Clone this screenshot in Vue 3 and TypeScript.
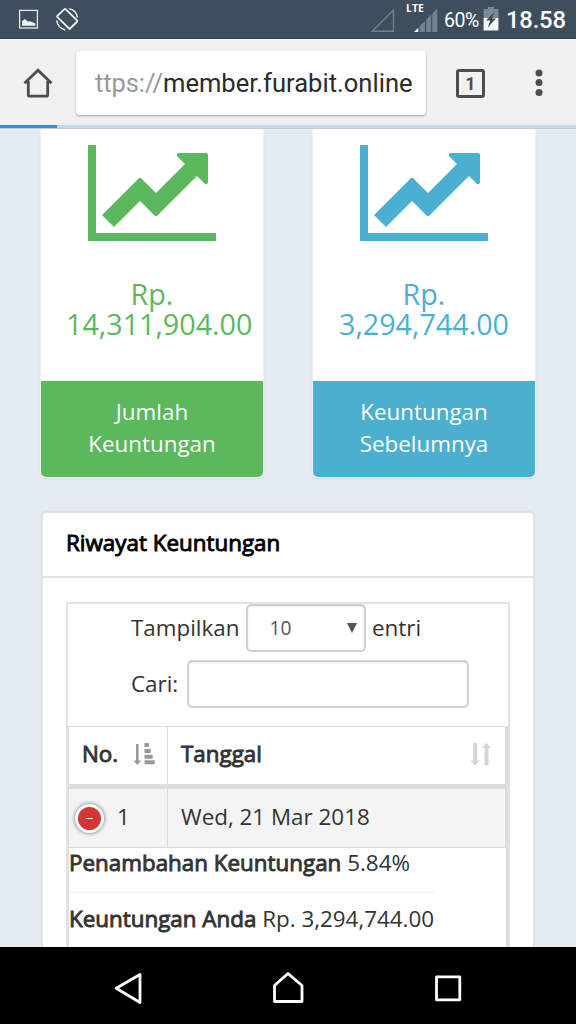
<script setup lang="ts">
interface Profit {
  amount: string
  lines: string[]
  tone: string
}

interface Detail {
  label: string
  value: string
}

const profits: Profit[] = [
  { amount: '14,311,904.00', lines: ['Jumlah', 'Keuntungan'], tone: 'green' },
  { amount: '3,294,744.00', lines: ['Keuntungan', 'Sebelumnya'], tone: 'blue' },
]

const details: Detail[] = [
  { label: 'Penambahan Keuntungan', value: '5.84%' },
  { label: 'Keuntungan Anda', value: 'Rp. 3,294,744.00' },
]
</script>

<template>
  <div class="phone">
    <header class="status">
      <svg class="notices" width="90" height="38" viewBox="0 0 90 38">
        <rect x="19.6" y="10.4" width="17.8" height="17.6" fill="none" stroke="#e4e8ea" stroke-width="1.3" />
        <path d="M22 25.8v-4.600l2.800-2.200 2.600 2.200 3.400.4 4.600 1.800v2.400z" fill="#eef1f2" />
        <g fill="none" stroke="#eef1f2">
          <path d="M64.2 9.4 57.6 15.6q-.9.9 0 1.8L69.6 29l7.2-7q.9-.9 0-1.800L65.8 9.400q-.8-.8-1.600 0z" stroke-width="1.9" />
          <path d="M69.2 8.700a10.600 10.600 0 0 1 8.300 9M65.300 30a10.600 10.600 0 0 1-8.600-9.600" stroke-width="1.4" />
        </g>
      </svg>
      <div class="signals">
        <svg width="76" height="38" viewBox="0 0 76 38">
          <path d="M2.3 31.3 23.500 10v21.300z" fill="none" stroke="#71808b" stroke-width="1.4" />
          <path d="M44 32l4.300-4.300V32z" fill="#f5f7f8" />
          <path d="M49.700 26.300l5.200-5.300v11h-5.200zM56.200 19.700l4.900-4.900V32h-4.900zM62.300 13.500l5-5V32h-5z" fill="#74828d" />
        </svg>
        <span class="lte">LTE</span>
        <span class="percent">60%</span>
        <svg class="battery" width="16" height="24" viewBox="0 0 16 24">
          <path d="M5 0h6v2h4.400v9H.6V2H5z" fill="#7b8992" />
          <path d="M0.600 11h14.800v12.500H.6z" fill="#f7f9fa" />
          <path d="M11.500 5 3 13.500h4.200L4.800 20.600 13 11.500H9z" fill="#3e4e5c" />
        </svg>
        <span class="clock">18.58</span>
      </div>
    </header>

    <div class="toolbar">
      <svg class="home" width="30" height="30" viewBox="0 0 30 30">
        <path d="M1.500 15.300 15 2.200l13.500 13.100M5.300 13v13.400q0 1.800 1.800 1.800h15.800q1.800 0 1.800-1.800V13" fill="none" stroke="#4d4d4d" stroke-width="2.8" />
      </svg>
      <div class="url"><span class="scheme">ttps://</span><span class="host">member.furabit.online</span></div>
      <div class="tabs">1</div>
      <svg class="more" width="8" height="28" viewBox="0 0 8 28" fill="#4d4d4d">
        <circle cx="4" cy="4" r="3.500" /><circle cx="4" cy="13.600" r="3.500" /><circle cx="4" cy="23.400" r="3.500" />
      </svg>
    </div>
    <div class="progress"><div class="progress-done"></div></div>

    <main class="page">
      <div class="cards">
        <section v-for="p in profits" :key="p.tone" class="card" :class="p.tone">
          <div class="card-body">
            <svg class="chart" width="128" height="112" viewBox="0 0 2048 1792">
              <path d="M2048 1536v128h-2048v-1536h128v1408h1920zM1920 288v435q0 21-19.500 29.500t-35.500-7.500l-121-121-633 633q-10 10-23 10t-23-10l-233-233-416 416-192-192 585-585q10-10 23-10t23 10l233 233 464-464-121-121q-16-16-7.500-35.500t29.500-19.500h435q14 0 23 9t9 23z" />
            </svg>
            <h3>Rp.<br />{{ p.amount }}</h3>
          </div>
          <div class="card-foot">{{ p.lines[0] }}<br />{{ p.lines[1] }}</div>
        </section>
      </div>

      <section class="panel">
        <h4 class="panel-title strong">Riwayat Keuntungan</h4>
        <div class="wrapper">
          <div class="length">
            <span>Tampilkan</span>
            <div class="select"><span>10</span><i class="caret"></i></div>
            <span>entri</span>
          </div>
          <div class="search"><span>Cari:</span><div class="input"></div></div>
          <div class="table">
            <div class="row head">
              <div class="cell no">
                <span class="strong">No.</span>
                <svg width="22" height="23" viewBox="0 0 22 23" fill="#999">
                  <path d="M3 1h2.600v16.500h2.400L4.300 22 0.500 17.500H3zM11.500 0h4.400v4h-4.400zM11.500 6h6.200v4h-6.200zM11.500 11.700h8.200v4h-8.200zM11.500 17.300h10.300v4h-10.300z" />
                </svg>
              </div>
              <div class="cell date">
                <span class="strong">Tanggal</span>
                <svg width="22" height="23" viewBox="0 0 22 23" fill="#d5d5d5">
                  <path d="M3.200 0h4v17.500H10L5.300 22.500.5 17.500h2.700zM14.500 22.500h4V5h2.800L16.500 0l-4.800 5h2.800z" />
                </svg>
              </div>
            </div>
            <div class="row data">
              <div class="cell no"><span class="collapse"><i></i></span><span>1</span></div>
              <div class="cell date"><span>Wed, 21 Mar 2018</span></div>
            </div>
            <div class="details">
              <div v-for="d in details" :key="d.label" class="detail">
                <span class="strong">{{ d.label }}</span> {{ d.value }}
              </div>
            </div>
          </div>
        </div>
      </section>
    </main>

    <nav class="nav">
      <svg width="576" height="77" viewBox="0 0 576 77" fill="none" stroke="#fff" stroke-width="2.8" stroke-linejoin="round">
        <path d="M140 27.500v28L116.200 41.300z" />
        <path d="M274.500 54.500V38.500L288 26.500l14 12v16z" />
        <rect x="436.500" y="29.800" width="23.300" height="23" />
      </svg>
    </nav>
  </div>
</template>

<style>
body {
  margin: 0;
  background: #000;
}
</style>

<style scoped>
* {
  box-sizing: border-box;
}
.phone {
  width: 576px;
  height: 1024px;
  display: flex;
  flex-direction: column;
  overflow: hidden;
  font: 22.4px/32px "Open Sans", "Noto Sans", sans-serif;
  color: #333;
}
.status {
  height: 39px;
  flex: none;
  display: flex;
  justify-content: space-between;
  background: #3e4e5c;
  border-bottom: 1px solid #34434f;
}
.signals {
  position: relative;
  display: flex;
  width: 206px;
  font-family: Roboto, sans-serif;
  color: #fff;
}
.lte {
  position: absolute;
  left: 36px;
  top: 2px;
  font: 700 10.5px/13px "Open Sans", sans-serif;
}
.percent {
  width: 38px;
  margin-left: -2px;
  font-size: 19.5px;
  line-height: 41px;
  letter-spacing: -0.4px;
}
.battery {
  margin: 7px 7px 0 1px;
}
.clock {
  font-size: 23.8px;
  font-weight: 500;
  line-height: 41px;
  letter-spacing: -0.2px;
}
.toolbar {
  height: 86px;
  flex: none;
  display: flex;
  align-items: center;
  background: #f1f1f1;
}
.home {
  margin: 1px 23px 0 23px;
}
.url {
  width: 350px;
  height: 64px;
  margin-top: 2px;
  padding-left: 19px;
  background: #fff;
  border-radius: 3px;
  box-shadow: 0 1px 2px rgba(0, 0, 0, 0.35);
  font: 25.55px/64px Roboto, sans-serif;
  white-space: nowrap;
}
.scheme {
  display: inline-block;
  width: 68px;
  letter-spacing: -0.1px;
  color: #999;
}
.host {
  color: #2b2b2b;
}
.tabs {
  width: 29px;
  height: 29px;
  margin: 2px 0 0 30px;
  border: 3px solid #4d4d4d;
  border-radius: 3px;
  font: 700 18px/24px Roboto, sans-serif;
  text-align: center;
  color: #4d4d4d;
}
.more {
  margin: 2px 0 0 50px;
}
.progress {
  height: 3px;
  flex: none;
  background: #c6d7f4;
}
.progress-done {
  width: 57px;
  height: 3px;
  background: #3f82f6;
}
.page {
  height: 819px;
  flex: none;
  overflow: hidden;
  padding: 0 40px;
  background: #e4eaf2;
  border-top: 1px solid #c3c9d2;
}
.cards {
  display: flex;
  justify-content: space-between;
}
.card {
  width: 224px;
  height: 349px;
  background: #fff;
  border: 1px solid #eff0f1;
  border-top: 0;
  border-radius: 0 0 6px 6px;
  box-shadow: 0 1px 2px rgba(0, 0, 0, 0.06);
  overflow: hidden;
  text-align: center;
}
.card-body {
  height: 252px;
  padding-top: 7.5px;
}
.chart {
  display: block;
  margin: 0 auto;
  fill: currentColor;
}
.card h3 {
  margin: 30px 25px 0;
  font-size: 28.7px;
  line-height: 30.5px;
  font-weight: 400;
  white-space: nowrap;
}
.green {
  color: #5cb85c;
}
.blue {
  color: #4bb0d0;
}
.card-foot {
  height: 96px;
  padding-top: 15px;
  color: #fff;
}
.green .card-foot {
  background: #5cb85c;
}
.blue .card-foot {
  background: #4bb0d0;
}
.panel {
  width: 494px;
  height: 600px;
  margin: 33px 0 0 1px;
  background: #fff;
  border: 2px solid #dfe1e3;
  border-radius: 5px;
}
.strong {
  font-weight: 400;
  -webkit-text-stroke: 0.9px currentColor;
}
.panel-title {
  height: 65px;
  margin: 0;
  padding: 14px 23px 0;
  border-bottom: 2px solid #e4e4e4;
  font-size: 22.4px;
  color: #000;
}
.wrapper {
  width: 444px;
  height: 540px;
  margin: 24px 0 0 23px;
  border: 2px solid #e2e2e2;
}
.length,
.search {
  display: flex;
  align-items: center;
  padding-left: 63px;
}
.length {
  height: 47px;
  gap: 7px;
}
.search {
  height: 65px;
  gap: 9px;
}
.select {
  width: 120px;
  height: 48px;
  flex: none;
  padding: 0 7px 0 21px;
  display: flex;
  align-items: center;
  justify-content: space-between;
  border: 2px solid #cfcfcf;
  border-radius: 5px;
  box-shadow: inset 0 1px 2px rgba(0, 0, 0, 0.08);
  font-size: 19.2px;
  color: #555;
}
.length > span:last-child {
  margin-left: -1.500px;
}
.caret {
  border: 5px solid transparent;
  border-top: 10px solid #555;
  border-bottom: 0;
}
.input {
  width: 282px;
  height: 48px;
  border: 2px solid #cfcfcf;
  border-radius: 5px;
  box-shadow: inset 0 1px 2px rgba(0, 0, 0, 0.08);
}
.table {
  height: 420px;
  margin-top: 10px;
  border: solid #ddd;
  border-width: 1px 2px 0 1px;
}
.row {
  display: flex;
  border-right: 1px solid #ddd;
}
.head {
  height: 62px;
  border-bottom: 5px solid #ddd;
}
.head .cell {
  padding-bottom: 4px;
}
.head svg {
  position: relative;
  top: 1px;
}
.data {
  height: 59px;
  border-bottom: 1px solid #ddd;
  background: #f4f4f4;
}
.data .cell > span:not(.collapse) {
  margin-top: -2px;
}
.cell {
  display: flex;
  align-items: center;
}
.no {
  width: 99px;
  padding-left: 13px;
  border-right: 1px solid #ddd;
}
.no svg {
  margin-left: 14.500px;
}
.date {
  flex: 1;
  padding: 0 13px 0 13px;
  justify-content: space-between;
}
.data .no {
  padding-left: 6px;
  gap: 13px;
}
.collapse {
  width: 29px;
  height: 29px;
  display: flex;
  align-items: center;
  justify-content: center;
  border: 3px solid #fff;
  border-radius: 50%;
  background: #d63333;
  box-shadow: 0 0 4px #666;
}
.collapse i {
  width: 7px;
  height: 1px;
  background: #fff;
}
.details {
  width: 365px;
  margin-top: -1px;
  white-space: nowrap;
}
.detail {
  height: 56px;
}
.detail:first-child {
  height: 46px;
  border-bottom: 1px solid #efefef;
}
.detail + .detail {
  padding-top: 10px;
}
.nav {
  height: 77px;
  flex: none;
  background: #000;
}
</style>
